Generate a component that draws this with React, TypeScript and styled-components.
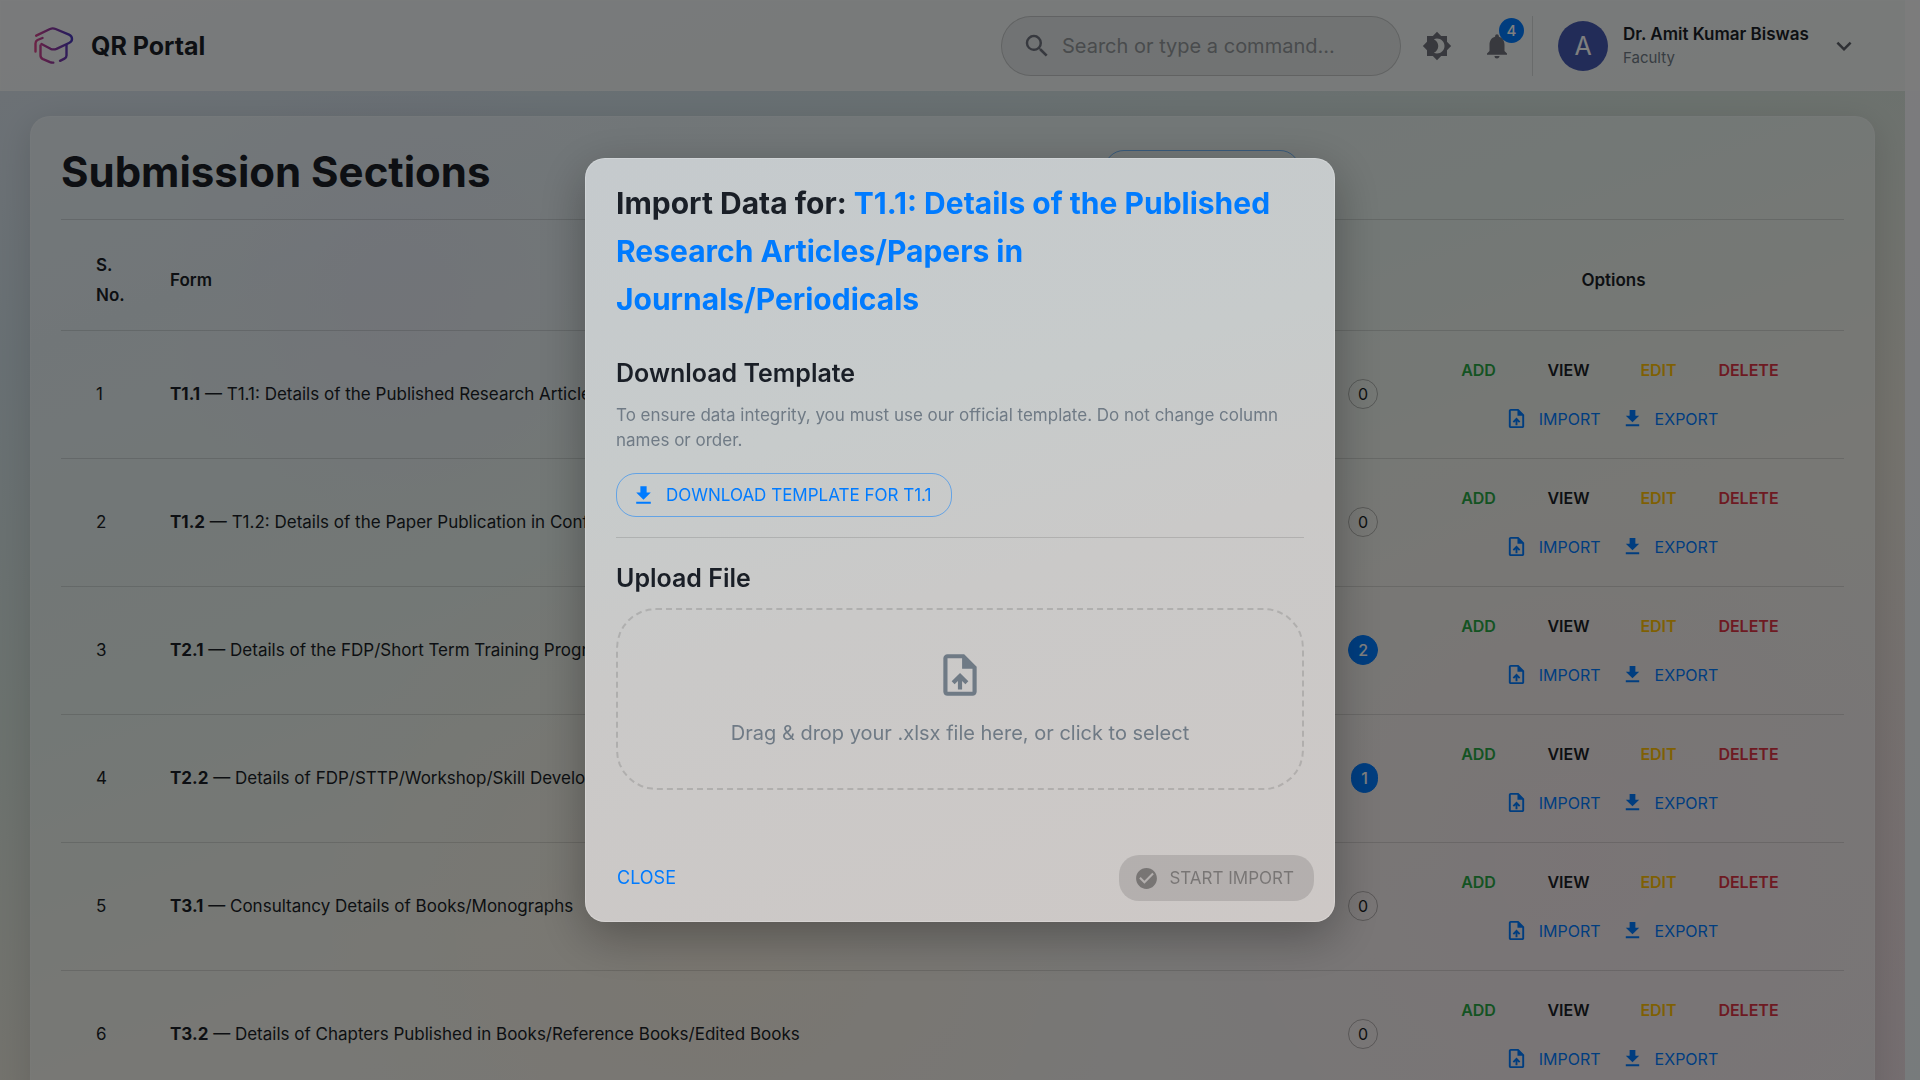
import React from 'react';
import styled, { createGlobalStyle, css } from 'styled-components';
import {
  MdSearch,
  MdBrightness4,
  MdNotifications,
  MdExpandMore,
  MdUploadFile,
  MdOutlineUploadFile,
  MdDownload,
  MdCheckCircle,
} from 'react-icons/md';

const color = {
  ink: '#1a1f27',
  muted: '#6f7a85',
  blue: '#007bff',
  green: '#28a745',
  amber: '#ffc107',
  red: '#dc3545',
  line: 'rgba(0, 0, 0, 0.12)',
};

const GlobalStyle = createGlobalStyle`
  *, *::before, *::after { box-sizing: border-box; }
  html { height: 100%; overflow: hidden; background: #f2f1f5; }
  body {
    margin: 0;
    height: 100%;
    overflow: hidden;
    font-family: Inter, "Liberation Sans", sans-serif;
    font-size: 17px;
    line-height: 30px;
    color: ${color.ink};
  }
  button, input { font: inherit; color: inherit; }
`;

const Page = styled.div`
  min-height: 100vh;
  padding-right: 15px;
  background: linear-gradient(180deg, #f8f6fb, #eff6f8);
`;

const Canvas = styled.div`
  min-height: 100vh;
  background:
    radial-gradient(circle at 21% 27%, rgba(205, 190, 235, 0.3), transparent 14%),
    radial-gradient(circle at 83% 78%, rgba(255, 190, 215, 0.25), transparent 26%),
    radial-gradient(circle at 38% 84%, rgba(255, 215, 160, 0.3), transparent 28%),
    linear-gradient(160deg, #dbe3ed 0%, #d0dfe6 20%, #d6e3dc 40%, #e8e5da 62%, #e9dde1 100%);
`;

const Header = styled.header`
  display: flex;
  align-items: center;
  justify-content: space-between;
  height: 91px;
  margin-right: -15px;
  padding: 0 60px 0 33px;
  border: 1px solid rgba(255, 255, 255, 0.2);
  background: rgba(247, 249, 249, 0.8);
`;

const Brand = styled.a`
  display: flex;
  align-items: center;
  gap: 17px;
  color: inherit;
  text-decoration: none;
  font-size: 25px;
  font-weight: 700;
`;

const HeaderTools = styled.div`
  display: flex;
  align-items: center;
`;

const SearchBox = styled.label`
  display: flex;
  align-items: center;
  gap: 10px;
  width: 400px;
  height: 60px;
  margin-right: 6px;
  padding: 0 20px;
  border: 1px solid rgba(0, 0, 0, 0.15);
  border-radius: 30px;
  background: rgba(0, 0, 0, 0.05);
  color: #6f737e;
`;

const SearchInput = styled.input`
  flex: 1;
  min-width: 0;
  padding: 0;
  border: 0;
  outline: 0;
  background: none;
  font-size: 20px;
  &::placeholder { color: #92979a; opacity: 1; }
`;

const IconButton = styled.button`
  position: relative;
  display: grid;
  place-items: center;
  width: 60px;
  height: 60px;
  padding: 0;
  border: 0;
  background: none;
  color: #70737c;
`;

const AlertBadge = styled.span`
  position: absolute;
  top: 2px;
  right: 3px;
  width: 25px;
  height: 25px;
  border-radius: 50%;
  background: ${color.blue};
  color: #fff;
  font-size: 15px;
  font-weight: 500;
  line-height: 25px;
`;

const Account = styled.button`
  display: flex;
  align-items: center;
  gap: 15px;
  height: 60px;
  margin-left: 5px;
  padding: 0 0 0 25px;
  border: 0;
  border-left: 1px solid ${color.line};
  background: none;
  text-align: left;
`;

const Avatar = styled.span`
  display: grid;
  place-items: center;
  width: 50px;
  height: 50px;
  border-radius: 50%;
  background: #4559b0;
  color: #fff;
  font-size: 25px;
`;

const AccountText = styled.span`
  display: flex;
  flex-direction: column;
  min-width: 191px;
  font-weight: 600;
  line-height: 24px;
`;

const Role = styled.small`
  color: ${color.muted};
  font-size: 15px;
  font-weight: 400;
`;

const Card = styled.main`
  margin: 25px 30px 0;
  padding: 0 30px;
  border: 1px solid rgba(255, 255, 255, 0.2);
  border-radius: 20px 20px 0 0;
  background: rgba(250, 255, 255, 0.45);
  box-shadow: 0 8px 32px rgba(0, 0, 0, 0.12);
`;

const CardHead = styled.div`
  display: flex;
  align-items: center;
  height: 103px;
  padding-top: 8px;
  border-bottom: 1px solid ${color.line};
`;

const PageTitle = styled.h1`
  flex: 1;
  margin: 0;
  font-size: 42px;
  line-height: 60px;
`;

const OutlineButton = styled.button`
  display: inline-flex;
  align-items: center;
  gap: 10px;
  height: 44px;
  padding: 0 20px 0 14px;
  border: 1px solid rgba(0, 123, 255, 0.5);
  border-radius: 20px;
  background: none;
  color: ${color.blue};
  text-transform: uppercase;
`;

const HeadAction = styled(OutlineButton)`
  width: 196px;
  margin-right: 544px;
`;

const Table = styled.table`
  width: 100%;
  border-collapse: collapse;
  table-layout: fixed;
`;

type CellProps = { $kind: 'number' | 'form' | 'count' | 'options' };

const cellPadding = {
  number: '0 35px',
  form: '0 20px 0 0',
  count: '0 5px 0 0',
  options: '0 35px',
};

const cellAlign = {
  number: 'left',
  form: 'left',
  count: 'right',
  options: 'center',
};

const cell = css<CellProps>`
  padding: ${(p) => cellPadding[p.$kind]};
  border-bottom: 1px solid ${color.line};
  text-align: ${(p) => cellAlign[p.$kind]};
`;

const columnWidth = {
  number: '109px',
  form: 'auto',
  count: '162px',
  options: '461px',
};

const Th = styled.th<CellProps>`
  ${cell}
  width: ${(p) => columnWidth[p.$kind]};
  height: 110px;
  padding-top: 10px;
  font-weight: 600;
`;

const Td = styled.td<CellProps>`
  ${cell}
  height: 128px;
  white-space: nowrap;
`;

const Count = styled.span<{ $filled: boolean }>`
  display: inline-block;
  height: 30px;
  padding: 0 9px;
  border: 1px solid ${(p) => (p.$filled ? color.blue : 'rgba(0, 0, 0, 0.26)')};
  border-radius: 15px;
  background: ${(p) => (p.$filled ? color.blue : 'transparent')};
  color: ${(p) => (p.$filled ? '#fff' : 'inherit')};
  font-size: 16px;
  font-weight: ${(p) => (p.$filled ? 500 : 400)};
  line-height: 28px;
`;

const Actions = styled.div`
  display: grid;
  grid-template-columns: repeat(4, 90px);
  justify-content: center;
`;

const FileActions = styled.div`
  display: flex;
  justify-content: center;
  gap: 20px;
  margin-top: 8px;
  padding-right: 4px;
`;

const TextButton = styled.button<{ $color: string; $bold?: boolean }>`
  display: inline-flex;
  align-items: center;
  justify-content: center;
  gap: 11px;
  height: 41px;
  padding: 0;
  border: 0;
  background: none;
  color: ${(p) => p.$color};
  font-size: 16px;
  font-weight: ${(p) => (p.$bold ? 600 : 400)};
  text-transform: uppercase;
`;

const Backdrop = styled.div`
  position: fixed;
  inset: 0;
  display: grid;
  place-items: center;
  background: rgba(0, 0, 0, 0.5);
`;

const Dialog = styled.section`
  width: 750px;
  max-width: calc(100vw - 80px);
  border: 1px solid rgba(255, 255, 255, 0.2);
  border-radius: 20px;
  background: linear-gradient(165deg, #c5cacd 0%, #c7cbcb 35%, #cac9c8 55%, #cdc8c6 100%) border-box;
  box-shadow: 0 14px 48px rgba(0, 0, 0, 0.3);
`;

const DialogTitle = styled.h2`
  margin: 0;
  padding: 20px 30px;
  font-size: 30px;
  line-height: 48px;
  em { color: ${color.blue}; font-style: normal; }
`;

const DialogBody = styled.div`
  padding: 10px 30px 50px;
`;

const SectionTitle = styled.h3`
  margin: 0 0 10px;
  font-size: 25px;
  font-weight: 600;
  line-height: 40px;
`;

const Hint = styled.p`
  margin: 0 0 20px;
  color: ${color.muted};
  line-height: 25px;
`;

const Divider = styled.hr`
  margin: 20px 0;
  border: 0;
  border-top: 1px solid ${color.line};
`;

const DropZone = styled.label`
  display: flex;
  flex-direction: column;
  align-items: center;
  gap: 17px;
  height: 182px;
  padding-top: 40px;
  border: 2px dashed rgba(0, 0, 0, 0.13);
  border-radius: 40px;
  color: ${color.muted};
  font-size: 20px;
  line-height: 32px;
  input { display: none; }
`;

const DialogFoot = styled.footer`
  display: flex;
  align-items: center;
  justify-content: space-between;
  padding: 15px 20px 20px 31px;
`;

const CloseButton = styled(TextButton)`
  font-size: 18px;
`;

const StartButton = styled.button`
  display: inline-flex;
  align-items: center;
  gap: 10px;
  height: 46px;
  padding: 0 20px 0 15px;
  border: 0;
  border-radius: 20px;
  background: rgba(0, 0, 0, 0.12);
  color: rgba(0, 0, 0, 0.33);
  text-transform: uppercase;
`;

const forms = [
  { code: 'T1.1', name: 'T1.1: Details of the Published Research Articles/Papers in Journals/Periodicals', count: 0 },
  { code: 'T1.2', name: 'T1.2: Details of the Paper Publication in Conferences', count: 0 },
  { code: 'T2.1', name: 'Details of the FDP/Short Term Training Program', count: 2 },
  { code: 'T2.2', name: 'Details of FDP/STTP/Workshop/Skill Development', count: 1 },
  { code: 'T3.1', name: 'Consultancy Details of Books/Monographs', count: 0 },
  { code: 'T3.2', name: 'Details of Chapters Published in Books/Reference Books/Edited Books', count: 0 },
];

function Logo() {
  return (
    <svg width="40" height="38" viewBox="0 0 40 38" fill="none" stroke="url(#brand)" strokeWidth="2.4" strokeLinecap="round" strokeLinejoin="round" aria-hidden="true">
      <defs>
        <linearGradient id="brand" gradientUnits="userSpaceOnUse" x1="1" y1="20" x2="38" y2="16">
          <stop offset="0" stopColor="#d8468a" />
          <stop offset="0.5" stopColor="#8c38a0" />
          <stop offset="1" stopColor="#4b38bc" />
        </linearGradient>
      </defs>
      <path d="M2.2 8.7 L16 2 Q18.800 .8 21.600 2 L35 7.600 Q38 9 38 12 Q38 14.600 35 16 L22.500 21.800 Q19.500 23 16.500 21.800 L7.500 17" />
      <path d="M1.500 24.500 V16.500 Q1.500 14 3.500 13 L8.500 11" />
      <path d="M6.500 18.500 V28.500 Q6.500 31 9 32.200 L16 35.200 Q17.600 35.800 19.300 35.600" />
      <path d="M32.500 18 V28.500 Q32.500 30.600 30.500 31.600 L26 33.800" />
    </svg>
  );
}

export default function App() {
  return (
    <>
      <GlobalStyle />
      <Page>
        <Canvas>
          <Header>
            <Brand href="#home">
              <Logo />
              QR Portal
            </Brand>
            <HeaderTools>
              <SearchBox>
                <MdSearch size={30} />
                <SearchInput type="text" aria-label="Search" placeholder="Search or type a command..." />
              </SearchBox>
              <IconButton type="button" aria-label="Theme"><MdBrightness4 size={30} /></IconButton>
              <IconButton type="button" aria-label="Notifications">
                <MdNotifications size={30} />
                <AlertBadge>4</AlertBadge>
              </IconButton>
              <Account type="button">
                <Avatar>A</Avatar>
                <AccountText>
                  Dr. Amit Kumar Biswas
                  <Role>Faculty</Role>
                </AccountText>
                <MdExpandMore size={30} color="#5c6068" />
              </Account>
            </HeaderTools>
          </Header>
          <Card>
            <CardHead>
              <PageTitle>Submission Sections</PageTitle>
              <HeadAction type="button" aria-label="Section action" />
            </CardHead>
            <Table>
              <thead>
                <tr>
                  <Th $kind="number">S. No.</Th>
                  <Th $kind="form">Form</Th>
                  <Th $kind="count" />
                  <Th $kind="options">Options</Th>
                </tr>
              </thead>
              <tbody>
                {forms.map((form, index) => (
                  <tr key={form.code}>
                    <Td $kind="number">{index + 1}</Td>
                    <Td $kind="form"><b>{form.code}</b> — {form.name}</Td>
                    <Td $kind="count"><Count $filled={form.count > 0}>{form.count}</Count></Td>
                    <Td $kind="options">
                      <Actions>
                        <TextButton type="button" $bold $color={color.green}>Add</TextButton>
                        <TextButton type="button" $bold $color={color.ink}>View</TextButton>
                        <TextButton type="button" $bold $color={color.amber}>Edit</TextButton>
                        <TextButton type="button" $bold $color={color.red}>Delete</TextButton>
                      </Actions>
                      <FileActions>
                        <TextButton type="button" $color={color.blue}><MdOutlineUploadFile size={23} />Import</TextButton>
                        <TextButton type="button" $color={color.blue}><MdDownload size={23} />Export</TextButton>
                      </FileActions>
                    </Td>
                  </tr>
                ))}
              </tbody>
            </Table>
          </Card>
        </Canvas>
      </Page>
      <Backdrop>
        <Dialog role="dialog" aria-modal="true" aria-labelledby="import-title">
          <DialogTitle id="import-title">
            Import Data for: <em>T1.1: Details of the Published Research Articles/Papers in Journals/Periodicals</em>
          </DialogTitle>
          <DialogBody>
            <SectionTitle>Download Template</SectionTitle>
            <Hint>To ensure data integrity, you must use our official template. Do not change column names or order.</Hint>
            <OutlineButton type="button"><MdDownload size={25} />Download Template for T1.1</OutlineButton>
            <Divider />
            <SectionTitle>Upload File</SectionTitle>
            <DropZone>
              <MdUploadFile size={50} />
              Drag &amp; drop your .xlsx file here, or click to select
              <input type="file" accept=".xlsx" />
            </DropZone>
          </DialogBody>
          <DialogFoot>
            <CloseButton type="button" $color={color.blue}>Close</CloseButton>
            <StartButton type="button" disabled><MdCheckCircle size={25} />Start Import</StartButton>
          </DialogFoot>
        </Dialog>
      </Backdrop>
    </>
  );
}
